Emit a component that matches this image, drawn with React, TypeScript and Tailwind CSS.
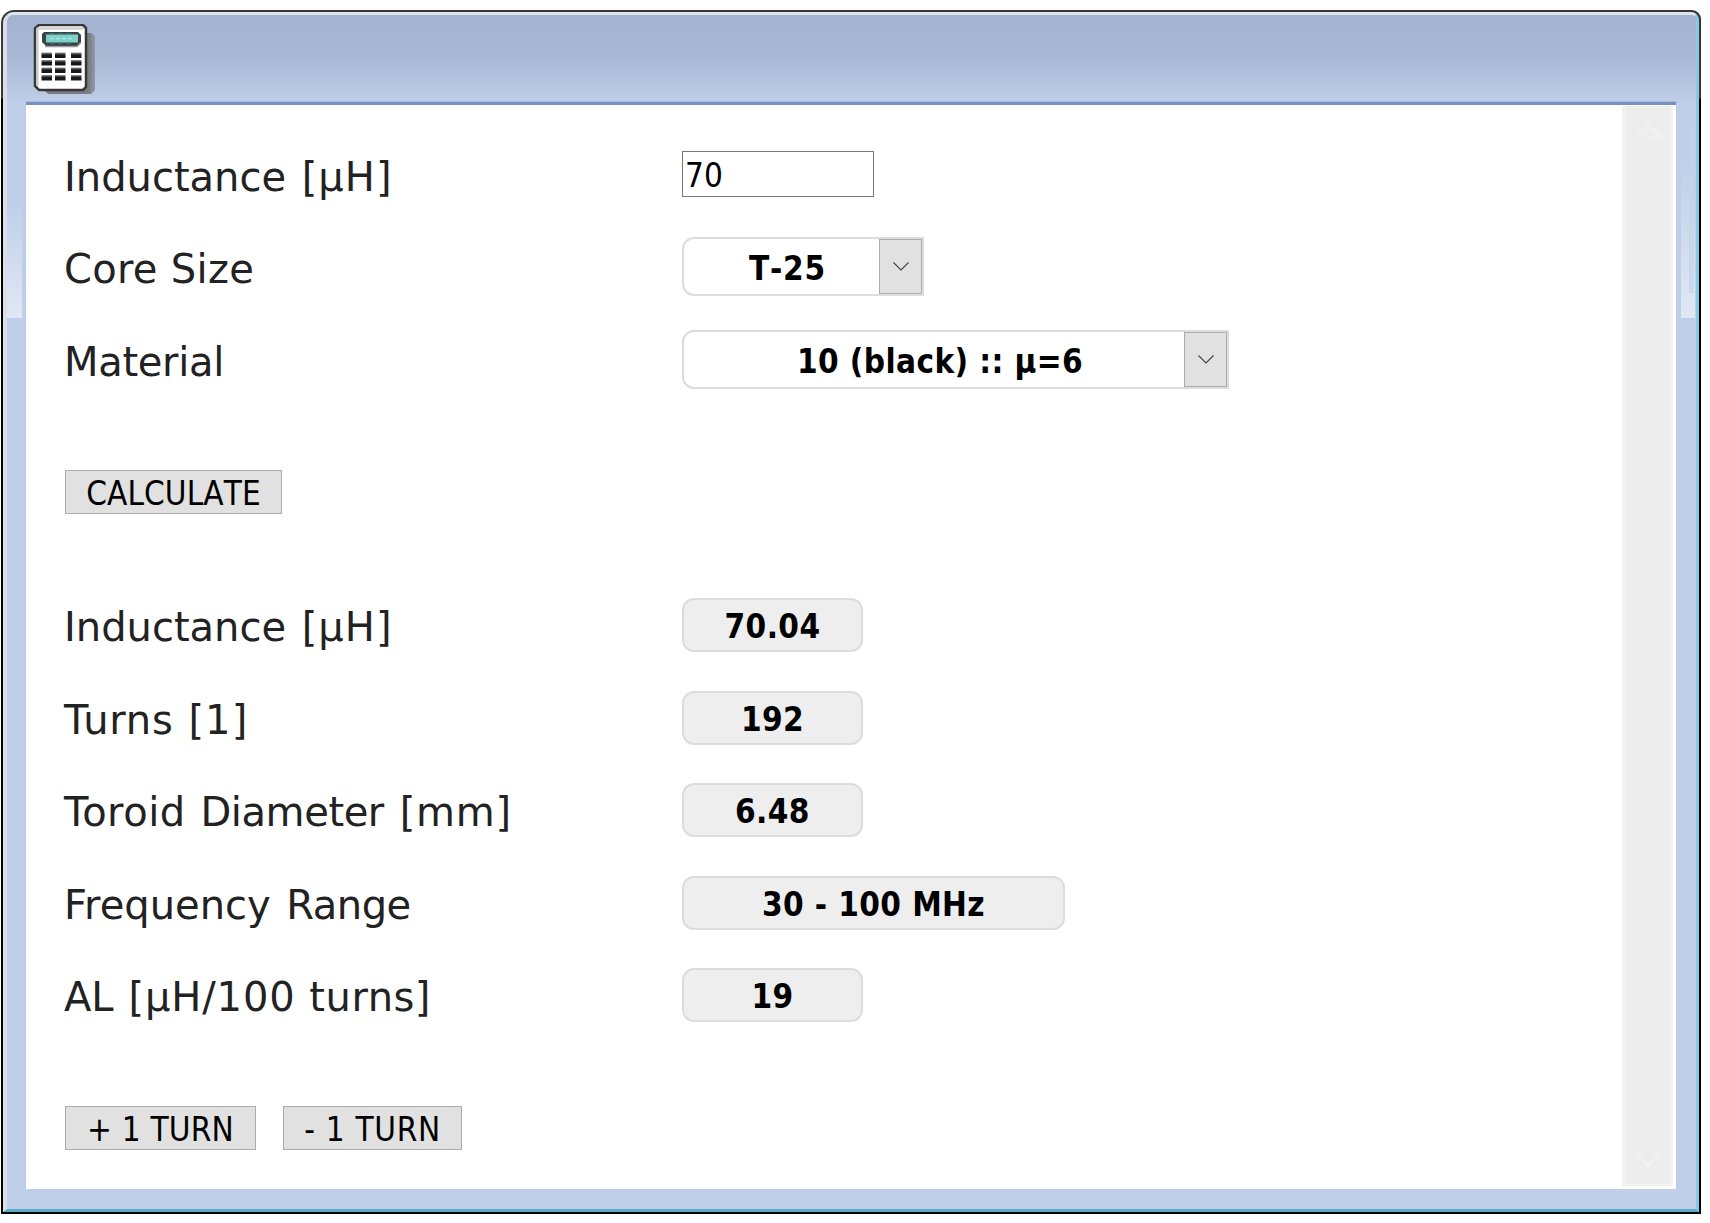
import React from "react";

const label = "text-[40px] leading-none whitespace-nowrap text-[#222]";
const body = "font-['DejaVu_Sans_Condensed','DejaVu_Sans',sans-serif] [font-stretch:condensed] [font-kerning:none] text-[33px] leading-none whitespace-nowrap text-black";

function Row({ text, children }: { text: React.ReactNode; children: React.ReactNode }) {
  return (
    <div className="flex h-[92.5px] items-center">
      <div className={`${label} w-[617px] shrink-0`}>{text}</div>
      {children}
    </div>
  );
}

function InductanceLabel() {
  return (
    <>
      Inductance <span className="ml-[3px] tracking-[1px]">[µH]</span>
    </>
  );
}

function Output({ text, width }: { text: string; width: string }) {
  return (
    <div className={`${body} ${width} mb-[4px] ml-px flex h-[54px] items-center justify-center rounded-[12px] border-2 border-[#dcdcdc] bg-[#eee] pt-[3px] font-bold tracking-[0.4px]`}>
      {text}
    </div>
  );
}

function Select({ text, width, tracking }: { text: string; width: string; tracking: string }) {
  return (
    <div className={`${width} mb-[5px] ml-px flex h-[59px] shrink-0 rounded-l-[12px] border-2 border-[#dcdcdc] bg-white`}>
      <div className={`${body} ${tracking} flex flex-1 items-center justify-center pt-[4px] pl-[12px] font-bold`}>{text}</div>
      <div className="flex w-[43px] shrink-0 items-center justify-center border border-[#adadad] bg-[#e1e1e1]">
        <svg width="18" height="11" viewBox="0 0 18 11" fill="none" stroke="#444" strokeWidth="1.2">
          <path d="M1.500 1.500 9 9l7.500-7.500" />
        </svg>
      </div>
    </div>
  );
}

function Button({ text, width, tracking }: { text: string; width: string; tracking: string }) {
  return (
    <button className={`${body} ${width} ${tracking} flex h-[44px] items-center justify-center border border-[#adadad] bg-[#e1e1e1] pt-[3px]`}>
      {text}
    </button>
  );
}

function CalculatorIcon() {
  return (
    <svg width="64" height="74" viewBox="0 0 64 74">
      <defs>
        <linearGradient id="key" x1="0" y1="0" x2="0" y2="1">
          <stop offset="0" stopColor="#999" />
          <stop offset=".45" stopColor="#181818" />
          <stop offset="1" stopColor="#181818" />
        </linearGradient>
        <linearGradient id="shade" x1="0" y1="0" x2="1" y2="0">
          <stop offset=".88" stopColor="#7b7d82" />
          <stop offset="1" stopColor="#919aab" />
        </linearGradient>
      </defs>
      <path d="M12 9h46l4 3v54l-4 4H15l-4-4Z" fill="url(#shade)" />
      <path d="M6 1h44l3 3v59l-3 3H6l-4-4V4Z" fill="#fff" stroke="#383838" strokeWidth="2.500" />
      <path d="M4.500 62V4.500h46" fill="none" stroke="#c8c8c8" strokeWidth="2" />
      <path d="M11 8h34l3 3v7l-3 4H13l-4-4V10Z" fill="#3c4144" />
      <path d="M12 22.500h32l4-4" fill="none" stroke="#999" strokeWidth="1.500" />
      <path d="M13 10.500h32v8H13Z" fill="#7fd0c8" />
      <path d="M17 10h5m3 0h5m3 0h5M17 19h5m3 0h5m3 0h5" stroke="#3a8a88" strokeWidth="1.500" />
      <path d="M17 14.500h4m2 0h4m2 0h4m2 0h4" stroke="#9adfd8" strokeWidth="2" />
      {[28.5, 36, 43.5, 51].map((y) =>
        [8.5, 22, 38].map((x) => <rect key={`${x}-${y}`} x={x} y={y} width="10.500" height="5.500" fill="url(#key)" />)
      )}
    </svg>
  );
}

export default function App() {
  return (
    <div className="h-[1223px] w-[1710px] overflow-hidden bg-white pt-[10px] pl-px font-['DejaVu_Sans',sans-serif]">
      <div className="h-[1204px] w-[1700px] rounded-tl-[13px] rounded-tr-[9px] bg-linear-to-b from-[#383838] from-[88px] to-black to-[90px] pt-[2px] pr-[2px] pb-[2px] pl-[2px]">
        <div className="h-full rounded-tl-[11px] rounded-tr-[8px] border-t-[3px] border-r-[3px] border-b-[3px] border-l-[4px] border-t-[#dde4ea] border-r-[#83cbe8] border-b-[#58adc4] border-l-[#d9dfe7] bg-[#bfcfe9] shadow-[inset_0_0_1px_#444]">
          <header className="h-[89px] rounded-tl-[7px] rounded-tr-[5px] bg-linear-to-b from-[#a2b2d0] via-[#a8b8d5] via-45% to-[#bfcfe9] pt-[9px] pl-[26px]">
            <CalculatorIcon />
          </header>
          <div className="flex h-[1105px] bg-[#bfcfe9]">
            <aside className="w-[19px] pr-[4px]">
              <div className="h-[214px] bg-linear-to-b from-[#bfcfe9] from-45% to-[#e0e8f3]" />
            </aside>
            <main className="-mt-[2px] flex h-[1087px] w-[1650px] justify-between border-t-[3px] border-[#7891c1] bg-white pr-[3px] shadow-[0_-1px_1px_#a9bcdf]">
              <div className="flex flex-col pt-[25.3px] pl-[38px]">
                <Row text={<InductanceLabel />}>
                  <input
                    readOnly
                    value="70"
                    className={`${body} mb-[5px] ml-px h-[46px] w-[192px] border border-[#7a7a7a] bg-white pt-[3px] pl-[2px] outline-none`}
                  />
                </Row>
                <Row text={<span className="tracking-[0.3px]">Core Size</span>}>
                  <Select text="T-25" width="w-[242px]" tracking="tracking-[0.8px]" />
                </Row>
                <Row text={<span className="tracking-[-0.3px]">Material</span>}>
                  <Select text="10 (black) :: µ=6" width="w-[547px]" tracking="tracking-[0.4px]" />
                </Row>
                <div className="mt-[62px] mb-[67px] ml-px flex">
                  <Button text="CALCULATE" width="w-[217px]" tracking="tracking-[0.1px]" />
                </div>
                <Row text={<InductanceLabel />}>
                  <Output text="70.04" width="w-[181px]" />
                </Row>
                <Row
                  text={
                    <>
                      <span className="tracking-[0.8px]">Turns</span> <span className="ml-[2px] tracking-[1.1px]">[1]</span>
                    </>
                  }
                >
                  <Output text="192" width="w-[181px]" />
                </Row>
                <Row
                  text={
                    <>
                      <span className="tracking-[0.5px]">Toroid</span> <span className="ml-[2px] tracking-[-0.4px]">Diameter</span>{" "}
                      <span className="ml-[3px] tracking-[0.8px]">[mm]</span>
                    </>
                  }
                >
                  <Output text="6.48" width="w-[181px]" />
                </Row>
                <Row
                  text={
                    <>
                      Frequency <span className="ml-[3px] tracking-[-0.5px]">Range</span>
                    </>
                  }
                >
                  <Output text="30 - 100 MHz" width="w-[383px]" />
                </Row>
                <Row
                  text={
                    <>
                      AL <span className="ml-[2px] tracking-[0.9px]">[µH/100</span> <span className="ml-px tracking-[0.5px]">turns]</span>
                    </>
                  }
                >
                  <Output text="19" width="w-[181px]" />
                </Row>
                <div className="mt-[63px] ml-px flex gap-[27px]">
                  <Button text="+ 1 TURN" width="w-[191px]" tracking="tracking-[0.2px]" />
                  <Button text="- 1 TURN" width="w-[179px]" tracking="tracking-[0.7px]" />
                </div>
              </div>
              <div className="mt-px flex h-[1080px] w-[51px] flex-col items-center justify-between border-r-2 border-b-2 border-l-4 border-[#f3f3f3] bg-[#ededed] py-[15px]">
                <svg width="30" height="20" viewBox="0 0 30 20" fill="none" stroke="#f2f2f2" strokeWidth="2">
                  <path d="m1 17 13-13 13 11v2H17" />
                </svg>
                <svg width="30" height="20" viewBox="0 0 30 20" fill="none" stroke="#f2f2f2" strokeWidth="2">
                  <path d="m1 3 13 13L27 3" />
                </svg>
              </div>
            </main>
            <aside className="flex-1 pr-[1px] pl-[5px]">
              <div className="h-[214px] bg-linear-to-b from-[#bfcfe9] from-25% to-[#e0e8f3] pl-[8px]">
                <div className="h-[189px] w-[5px] bg-linear-to-b from-[#bfcfe9] to-[#cbd8ec]" />
              </div>
            </aside>
          </div>
        </div>
      </div>
    </div>
  );
}
